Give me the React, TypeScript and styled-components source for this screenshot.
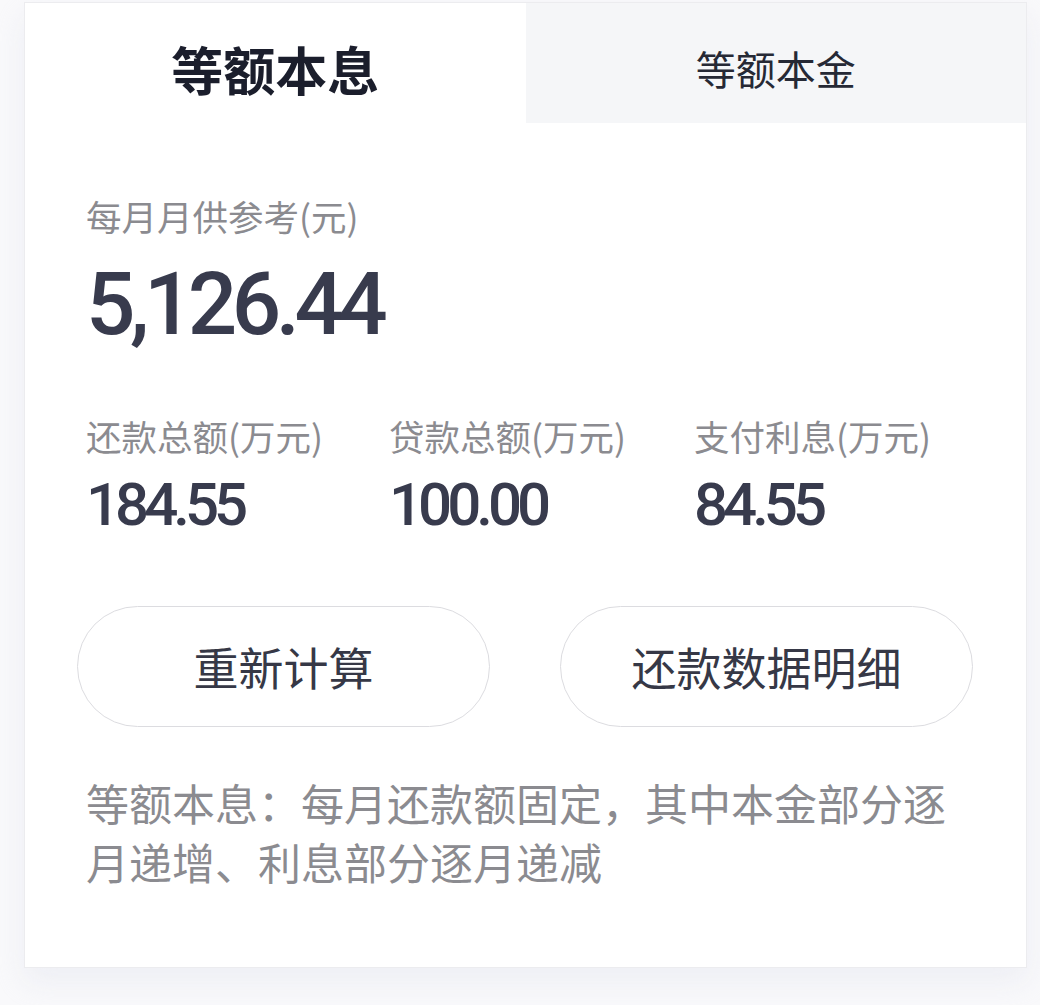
import styled, { createGlobalStyle } from 'styled-components'

const GlobalStyle = createGlobalStyle`
  body {
    margin: 0;
    background-color: #f9f9fb;
    font-family: "Noto Sans CJK SC", "Noto Sans", sans-serif;
  }
`

const Page = styled.div`
  padding: 2px 13px 40px 24px;
`

const Card = styled.div`
  width: 1003px;
  background-color: white;
  border: 1px solid #ececef;
  box-sizing: border-box;
  box-shadow: 0 14px 28px rgba(230, 232, 240, 0.6);
  padding-bottom: 76px;
`

const Tabs = styled.div`
  display: flex;
  height: 120px;
`

const Tab = styled.div<{ $active?: boolean }>`
  flex: 1;
  display: flex;
  align-items: center;
  justify-content: center;
  padding-top: 10px;
  box-sizing: border-box;
  background-color: ${(p) => (p.$active ? 'white' : '#f5f6f8')};
  color: ${(p) => (p.$active ? '#1b1e2c' : '#262935')};
  font-size: ${(p) => (p.$active ? '52px' : '40px')};
  font-weight: ${(p) => (p.$active ? 700 : 400)};
`

const Body = styled.div`
  padding: 73px 53px 0 61px;
`

const Label = styled.div`
  font-size: 35.5px;
  line-height: 40px;
  color: #8b8b90;
  white-space: nowrap;
`

const Amount = styled.div`
  margin-top: 24px;
  font-family: Roboto, "Noto Sans", sans-serif;
  font-size: 87px;
  line-height: 88px;
  font-weight: 500;
  letter-spacing: -5.5px;
  color: #383b4d;
`

const Stats = styled.div`
  display: grid;
  grid-template-columns: 303px 305px 1fr;
  margin-top: 68px;
`

const Stat = styled.div`
  display: flex;
  flex-direction: column;
`

const StatValue = styled.div`
  margin-top: 18px;
  font-family: Roboto, "Noto Sans", sans-serif;
  font-size: 60px;
  line-height: 62px;
  font-weight: 500;
  letter-spacing: -5px;
  color: #383b4d;
`

const Buttons = styled.div`
  display: flex;
  gap: 70px;
  margin: 70px 0 0 -9px;
`

const PillButton = styled.button`
  width: 413px;
  height: 121px;
  border: 1px solid #dcdce0;
  border-radius: 61px;
  background-color: white;
  font-family: "Noto Sans CJK SC", sans-serif;
  font-size: 45px;
  color: #363846;
  padding: 0;
`

const Note = styled.p`
  margin: 46px 0 0;
  font-size: 43px;
  line-height: 59px;
  color: #8b8b90;
  width: 880px;
`

const stats = [
  { label: '还款总额(万元)', value: '184.55' },
  { label: '贷款总额(万元)', value: '100.00' },
  { label: '支付利息(万元)', value: '84.55' },
]

const App = () => {
  return (
    <Page>
      <GlobalStyle />
      <Card>
        <Tabs>
          <Tab $active>等额本息</Tab>
          <Tab>等额本金</Tab>
        </Tabs>
        <Body>
          <Label>每月月供参考(元)</Label>
          <Amount>5,126.44</Amount>
          <Stats>
            {stats.map((s) => (
              <Stat key={s.label}>
                <Label>{s.label}</Label>
                <StatValue>{s.value}</StatValue>
              </Stat>
            ))}
          </Stats>
          <Buttons>
            <PillButton>重新计算</PillButton>
            <PillButton>还款数据明细</PillButton>
          </Buttons>
          <Note>等额本息：每月还款额固定，其中本金部分逐月递增、利息部分逐月递减</Note>
        </Body>
      </Card>
    </Page>
  )
}

export default App
